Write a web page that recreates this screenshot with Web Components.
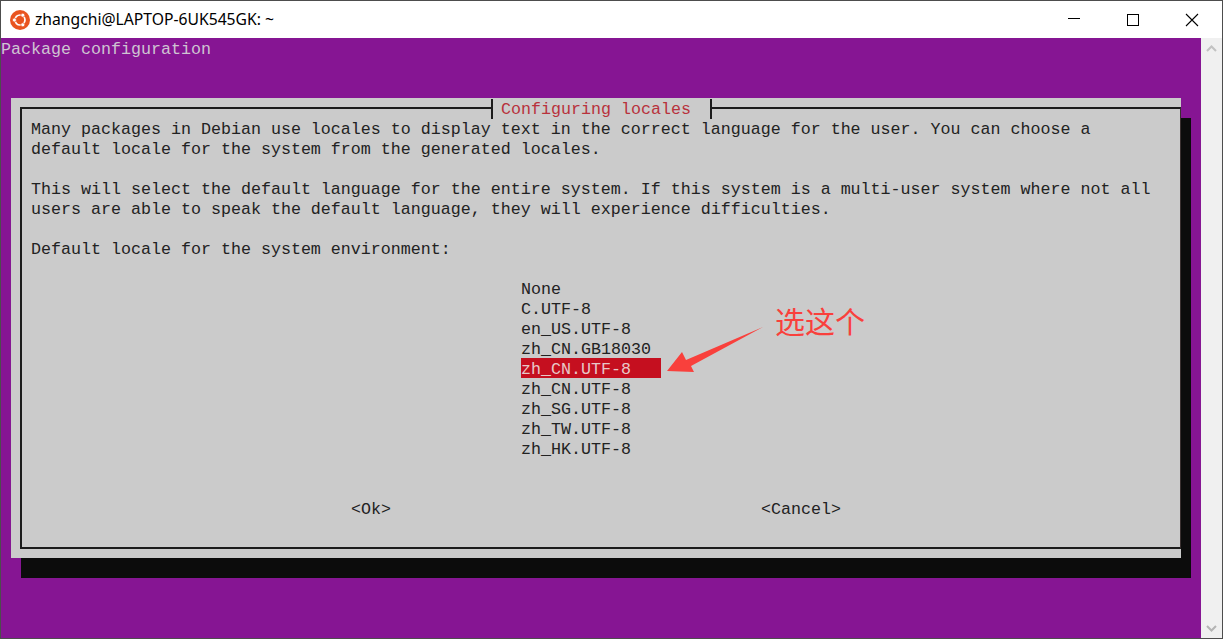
<!DOCTYPE html>
<html>
<head>
<meta charset="utf-8">
<title>Configuring locales</title>
<style>
  html, body { margin: 0; height: 100%; background: #fff; overflow: hidden; }
</style>
</head>
<body>
<term-window title="zhangchi@LAPTOP-6UK545GK: ~">
  <locale-dialog heading="Configuring locales"></locale-dialog>
</term-window>

<script>
class TitleBar extends HTMLElement {
  constructor() {
    super();
    this.shadowDOM = this.attachShadow({ mode: 'open' });
  }

  connectedCallback() {
    this.shadowDOM.innerHTML = `
      <style>
        :host{
          display: flex;
          align-items: center;
          height: 37px;
          background: #fff;
          color: #000;
        }
        .logo{ margin-left: 9px; width: 20px; height: 20px; }
        .text{ margin-left: 5px; margin-top: -1px; white-space: pre; font: 15.7px "Noto Sans", sans-serif; }
        .btns{ margin-left: auto; padding-right: 1px; display: flex; }
        .btns div{ width: 59px; height: 37px; display: flex; align-items: center; justify-content: center; }
        .btns svg{ width: 14px; height: 14px; }
      </style>
      <svg class="logo" viewBox="0 0 20 20">
        <circle cx="10" cy="10" r="10" fill="#e95420"/>
        <circle cx="10" cy="10" r="5" fill="none" stroke="#fff" stroke-width="1.7"/>
        <circle cx="4.4" cy="10" r="2" fill="#fff" stroke="#e95420" stroke-width=".7"/>
        <circle cx="12.8" cy="5.2" r="2" fill="#fff" stroke="#e95420" stroke-width=".7"/>
        <circle cx="12.8" cy="14.8" r="2" fill="#fff" stroke="#e95420" stroke-width=".7"/>
      </svg>
      <span class="text">${this.getAttribute('title')}</span>
      <div class="btns">
        <div><svg viewBox="0 0 14 14"><path d="M1 5.5h12" stroke="#000" stroke-width="1"/></svg></div>
        <div><svg viewBox="0 0 14 14"><rect x="1.5" y="1.5" width="11" height="11" fill="none" stroke="#000"/></svg></div>
        <div><svg viewBox="0 0 14 14"><path d="M1 1l12 12M13 1L1 13" stroke="#000" stroke-width="1.1"/></svg></div>
      </div>
    `;
  }
}
customElements.define('title-bar', TitleBar);

class ScrollRail extends HTMLElement {
  constructor() {
    super();
    this.shadowDOM = this.attachShadow({ mode: 'open' });
  }

  connectedCallback() {
    this.shadowDOM.innerHTML = `
      <style>
        :host{
          display: flex;
          flex-direction: column;
          justify-content: space-between;
          align-items: center;
          width: 21px;
          background: #f0f0f0;
          padding: 7px 0 6px;
          box-sizing: border-box;
        }
        svg{ width: 11px; height: 7px; display: block; }
      </style>
      <svg viewBox="0 0 11 7"><path d="M1 6l4.5-4.5L10 6" fill="none" stroke="#c2c2c2" stroke-width="2"/></svg>
      <svg viewBox="0 0 11 7"><path d="M1 1l4.5 4.5L10 1" fill="none" stroke="#b4b4b4" stroke-width="2"/></svg>
    `;
  }
}
customElements.define('scroll-rail', ScrollRail);

class TermWindow extends HTMLElement {
  constructor() {
    super();
    this.shadowDOM = this.attachShadow({ mode: 'open' });
  }

  connectedCallback() {
    this.shadowDOM.innerHTML = `
      <style>
        :host{
          display: flex;
          flex-direction: column;
          width: 1223px;
          height: 639px;
          box-sizing: border-box;
          border: 1px solid #4d4d4d;
          background: #f0f0f0;
        }
        .body{ flex: 1; display: flex; min-height: 0; }
        .screen{
          flex: 1;
          background: #861593;
          color: #cfc4d2;
          font: 16.67px/20px "Liberation Mono", monospace;
        }
        .top{ height: 20px; line-height: 24px; white-space: pre; }
        .wrap{ padding: 40px 0 0 10px; }
      </style>
      <title-bar title="${this.getAttribute('title')}"></title-bar>
      <div class="body">
        <div class="screen">
          <div class="top">Package configuration</div>
          <div class="wrap"><slot></slot></div>
        </div>
        <scroll-rail></scroll-rail>
      </div>
    `;
  }
}
customElements.define('term-window', TermWindow);

class LocaleDialog extends HTMLElement {
  constructor() {
    super();
    this.shadowDOM = this.attachShadow({ mode: 'open' });
  }

  connectedCallback() {
    const intro = [
      'Many packages in Debian use locales to display text in the correct language for the user. You can choose a',
      'default locale for the system from the generated locales.',
      '',
      'This will select the default language for the entire system. If this system is a multi-user system where not all',
      'users are able to speak the default language, they will experience difficulties.',
      '',
      'Default locale for the system environment:',
      '',
    ];
    const locales = ['None', 'C.UTF-8', 'en_US.UTF-8', 'zh_CN.GB18030', 'zh_CN.UTF-8', 'zh_CN.UTF-8', 'zh_SG.UTF-8', 'zh_TW.UTF-8', 'zh_HK.UTF-8'];

    this.shadowDOM.innerHTML = `
      <style>
        :host{
          display: block;
          position: relative;
          width: 1170px;
          height: 460px;
          box-sizing: border-box;
          padding: 9px 0 0 9px;
          background: #cbcbcb;
          color: #222;
          box-shadow: 10px 20px 0 #0c0c0c;
          font: 16.67px/20px "Liberation Mono", monospace;
        }
        .frame{
          width: 1161px;
          height: 442px;
          box-sizing: border-box;
          border: 2px solid #1c1c1c;
          border-right: 1px solid #3a3030;
          padding: 9px 0 0 9px;
          position: relative;
        }
        .heading{
          position: absolute;
          top: -10px;
          left: 469px;
          height: 20px;
          line-height: 22px;
          background: #cbcbcb;
          color: #b8323c;
          border-left: 2px solid #1c1c1c;
          border-right: 2px solid #1c1c1c;
          padding: 0 19px 0 8px;
          white-space: pre;
        }
        .line{ height: 20px; line-height: 24px; white-space: pre; }
        .list{ margin-left: 490px; }
        .sel{ width: 140px; background: #c50f1f; color: #e8c8c8; }
        .buttons{ display: flex; margin-top: 40px; padding-left: 320px; line-height: 24px; }
        .buttons span:first-child{ width: 410px; }
        .arrow{ position: absolute; left: 655px; top: 225px; width: 100px; height: 55px; }
        .note{
          position: absolute;
          left: 764px;
          top: 202px;
          font: 30px/40px "Noto Sans CJK SC", sans-serif;
          color: #f9403c;
        }
      </style>
      <div class="frame">
        <div class="heading">${this.getAttribute('heading')}</div>
        ${intro.map((t) => `<div class="line">${t}</div>`).join('')}
        <div class="list">
          ${locales.map((l, i) => `<div class="line${i === 4 ? ' sel' : ''}">${l}</div>`).join('')}
        </div>
        <div class="buttons"><span>&lt;Ok&gt;</span><span>&lt;Cancel&gt;</span></div>
      </div>
      <svg class="arrow" viewBox="0 0 100 55">
        <path d="M1 48L16 29 20 37 97 4 25 43 28 49z" fill="#f9403c"/>
      </svg>
      <div class="note">选这个</div>
    `;
  }
}
customElements.define('locale-dialog', LocaleDialog);
</script>
</body>
</html>
